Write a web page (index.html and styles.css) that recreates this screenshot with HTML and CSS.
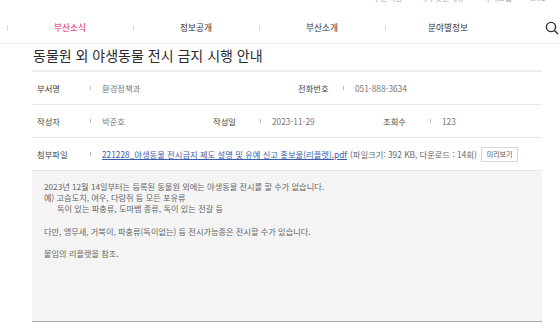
FILE: index.html
```html
<!DOCTYPE html>
<html lang="ko">
<head>
  <meta charset="UTF-8">
  <meta name="viewport" content="width=device-width, initial-scale=1.0">
  <title>동물원 외 야생동물 전시 금지 시행 안내</title>
  <link rel="stylesheet" href="styles.css">
</head>
<body>
  <!-- 상단 유틸 메뉴 (잘려 보임) -->
  <div class="util">
    <span>부산시청</span><span>자주찾는메뉴</span><span>사이트맵</span><span>ENG</span>
  </div>

  <!-- 주 메뉴 -->
  <div class="gnb">
    <a class="gnb-item active" href="#">부산소식</a>
    <a class="gnb-item" href="#">정보공개</a>
    <a class="gnb-item" href="#">부산소개</a>
    <a class="gnb-item" href="#">분야별정보</a>
    <span class="search">
      <svg width="14" height="14" viewBox="0 0 14 14"><circle cx="6" cy="6" r="4.6" fill="none" stroke="#333" stroke-width="1.4"/><path d="M9.4 9.4 L13 13" stroke="#333" stroke-width="1.4"/></svg>
    </span>
  </div>

  <div class="content">
    <h2 class="title">동물원 외 야생동물 전시 금지 시행 안내</h2>

    <div class="view">
      <div class="row row-2">
        <div class="cell">
          <span class="label wide">부서명</span><span class="bar"></span><span class="value">환경정책과</span>
        </div>
        <div class="cell">
          <span class="label">전화번호</span><span class="bar"></span><span class="value">051-888-3634</span>
        </div>
      </div>
      <div class="row row-3">
        <div class="cell">
          <span class="label wide">작성자</span><span class="bar"></span><span class="value">박준호</span>
        </div>
        <div class="cell">
          <span class="label mid">작성일</span><span class="bar"></span><span class="value">2023-11-29</span>
        </div>
        <div class="cell">
          <span class="label mid">조회수</span><span class="bar"></span><span class="value">123</span>
        </div>
      </div>
      <div class="row">
        <div class="cell">
          <span class="label wide">첨부파일</span><span class="bar"></span>
          <span class="value">
            <a class="file" href="#">221228_야생동물 전시금지 제도 설명 및 유예 신고 홍보물(리플렛).pdf</a>
            <span class="file-info">(파일크기: 392 KB, 다운로드 : 14회)</span>
            <button class="preview">미리보기</button>
          </span>
        </div>
      </div>
    </div>

    <div class="body-text">
      <p>2023년 12월 14일부터는 등록된 동물원 외에는 야생동물 전시를 할 수가 없습니다.</p>
      <p>예) 고슴도치, 여우, 다람쥐 등 모든 포유류</p>
      <p class="indent">독이 있는 파충류, 도마뱀 종류, 독이 있는 전갈 등</p>
      <p class="blank"></p>
      <p>다만, 앵무새, 거북이, 파충류(독이없는) 등 전시가능종은 전시할 수가 있습니다.</p>
      <p class="blank"></p>
      <p>붙임의 리플렛을 참조.</p>
    </div>
  </div>
</body>
</html>
```

FILE: styles.css
```css
/* 기본 */
body {
  margin: 0;
  font-family: "Noto Sans CJK KR", "Noto Sans", sans-serif;
  color: #333;
  background: #fff;
}
a {
  text-decoration: none;
  color: inherit;
}
p {
  margin: 0;
}

/* 상단 유틸 */
.util {
  height: 4px;
  overflow: hidden;
  display: flex;
  justify-content: flex-end;
  gap: 18px;
  padding-right: 14px;
  font-size: 8px;
  color: #aaa;
}
.util span {
  display: block;
  margin-top: -8px;
}

/* 주 메뉴 */
.gnb {
  display: flex;
  align-items: center;
  height: 31px;
  margin-top: 8px;
  padding-left: 7px;
  border-bottom: 1px solid #eee;
}
.gnb-item {
  position: relative;
  width: 126px;
  text-align: center;
  font-size: 8.7px;
  color: #333;
}
.gnb-item::before {
  content: "";
  position: absolute;
  left: 0;
  top: 50%;
  width: 1px;
  height: 6px;
  margin-top: -3px;
  background: #ddd;
}
.gnb-item.active {
  color: #e3215a;
}
.search {
  display: flex;
  margin-left: 34px;
}

/* 본문 */
.content {
  margin: 0 18px 0 32px;
}
.title {
  margin: 0;
  height: 26px;
  line-height: 22px;
  padding-left: 1px;
  font-size: 14px;
  font-weight: normal;
  color: #2a2a2a;
  border-bottom: 2px solid #eee;
}

/* 정보 표 */
.row {
  display: grid;
  grid-template-columns: 1fr;
  height: 32px;
  padding-left: 5px;
  border-bottom: 1px solid #e8e8e8;
  font-size: 8.3px;
}
.row-2 {
  grid-template-columns: 261px 1fr;
}
.row-3 {
  grid-template-columns: 176px 170px 1fr;
}
.cell {
  display: flex;
  align-items: center;
  white-space: nowrap;
}
.label {
  width: 45px;
  color: #444;
}
.label.wide {
  width: 53px;
}
.label.mid {
  width: 47px;
}
.bar {
  width: 1px;
  height: 4px;
  background: #bbb;
  margin-right: 11px;
}
.value {
  display: flex;
  align-items: center;
  color: #777;
}
.file {
  color: #3b5cab;
  text-decoration: underline;
}
.file-info {
  margin-left: 3px;
  color: #666;
}
.preview {
  margin-left: 4px;
  height: 15px;
  padding: 0 5px;
  border: 1px solid #d6d6d6;
  background: #fff;
  font-family: inherit;
  font-size: 7px;
  color: #555;
}

/* 내용 */
.body-text {
  height: 140px;
  padding: 10px 12px 0;
  background: #f4f4f4;
  border-bottom: 1px solid #aaa;
  font-size: 8.2px;
  line-height: 11.2px;
  color: #666;
}
.indent {
  padding-left: 13px;
}
.blank {
  height: 11.2px;
}
```
